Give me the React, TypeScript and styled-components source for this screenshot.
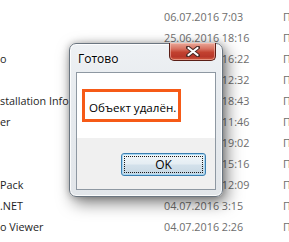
import React from "react";
import styled, { createGlobalStyle } from "styled-components";

const Global = createGlobalStyle`
  html, body { margin: 0; padding: 0; background: #ffffff; overflow: hidden; }
  body { font-family: "Open Sans", "Noto Sans", sans-serif; }
`;

const Screen = styled.div`
  position: relative;
  width: 289px;
  height: 242px;
  overflow: hidden;
  background: #ffffff;
`;

const FileList = styled.div`
  display: flex;
  flex-direction: column;
  padding-top: 6px;
`;

const Row = styled.div`
  display: grid;
  grid-template-columns: 164px 119px 1fr;
  height: 21px;
  line-height: 21px;
  font-size: 10.8px;
  white-space: nowrap;
`;

const NameCell = styled.div`
  color: #1e1e1e;
  overflow: hidden;
`;

const DateCell = styled.div`
  color: #6d6d6d;
`;

const TypeCell = styled.div`
  color: #6d6d6d;
  overflow: hidden;
`;

const Dialog = styled.div`
  position: absolute;
  left: 69px;
  top: 43px;
  width: 154px;
  height: 154px;
  box-sizing: border-box;
  padding: 0 6px 6px 6px;
  border: 1px solid #6a7580;
  border-radius: 7px;
  background: linear-gradient(#eef1f4 0%, #e6eaee 40%, #e2e6ea 100%);
  box-shadow: inset 0 0 0 1px rgba(255, 255, 255, 0.85), 4px 6px 16px rgba(0, 0, 0, 0.5),
    0 0 7px rgba(0, 0, 0, 0.25);
  display: flex;
  flex-direction: column;
`;

const TitleBar = styled.div`
  position: relative;
  height: 28px;
  display: flex;
  align-items: center;
  padding-left: 2px;
  font-size: 12px;
  color: #000;
  text-shadow: 0 0 6px #fff, 0 0 3px #fff;
`;

const CloseButton = styled.div`
  position: absolute;
  top: -1px;
  right: 0;
  width: 47px;
  height: 18px;
  box-sizing: border-box;
  border: 1px solid #5a1e16;
  border-top: none;
  border-radius: 0 0 5px 5px;
  background: linear-gradient(#e9a898 0%, #d7705f 35%, #c2412f 55%, #b8372a 80%, #d05a3e 100%);
  box-shadow: inset 0 0 0 1px rgba(255, 210, 200, 0.5);
  display: flex;
  align-items: center;
  justify-content: center;
`;

const Client = styled.div`
  flex: 1;
  border: 1px solid #8e98a2;
  display: flex;
  flex-direction: column;
`;

const MessageArea = styled.div`
  height: 65px;
  background: #ffffff;
  padding: 16px 0 0 5px;
  box-sizing: border-box;
`;

const Highlight = styled.div`
  width: 99px;
  height: 33px;
  box-sizing: border-box;
  border: 3px solid #f65a17;
  padding: 8px 0 0 4px;
  font-size: 11.6px;
  line-height: 16px;
  color: #000;
  white-space: nowrap;
`;

const Footer = styled.div`
  flex: 1;
  background: #f0f0f0;
  display: flex;
  justify-content: flex-end;
  align-items: flex-start;
  padding: 15px 9px 0 0;
`;

const OkButton = styled.button`
  position: relative;
  width: 85px;
  height: 23px;
  padding: 0;
  border: 1px solid #3c7fb1;
  border-radius: 3px;
  background: linear-gradient(#f1f6f9 0%, #e4edf3 48%, #d3e1eb 52%, #c6d7e3 100%);
  box-shadow: inset 0 0 0 1px #a9d8f3;
  font-family: "Open Sans", "Noto Sans", sans-serif;
  font-size: 12px;
  color: #000;

  &::after {
    content: "";
    position: absolute;
    inset: 2px;
    border: 1px dotted #1a1a1a;
    pointer-events: none;
  }
`;

const rows = [
  { name: "", date: "06.07.2016 7:03" },
  { name: "", date: "25.06.2016 18:16" },
  { name: "o", date: "05.07.2016 16:22" },
  { name: "", date: "05.07.2016 12:32" },
  { name: "stallation Info", date: "05.07.2016 18:43" },
  { name: "er", date: "05.07.2016 11:46" },
  { name: "", date: "04.07.2016 19:02" },
  { name: "", date: "04.07.2016 15:16" },
  { name: "Pack", date: "04.07.2016 12:09" },
  { name: ".NET", date: "04.07.2016 3:15" },
  { name: "o Viewer", date: "04.07.2016 2:26" },
];

export default function App() {
  return (
    <>
      <Global />
      <Screen>
        <FileList>
          {rows.map((r, i) => (
            <Row key={i}>
              <NameCell>{r.name}</NameCell>
              <DateCell>{r.date}</DateCell>
              <TypeCell>Папка с файлами</TypeCell>
            </Row>
          ))}
        </FileList>
        <Dialog>
          <TitleBar>
            Готово
            <CloseButton>
              <svg width="14" height="11" viewBox="0 0 14 11">
                <path
                  d="M2 1.5 L12 9.5 M12 1.5 L2 9.5"
                  stroke="#4a2a26"
                  strokeWidth="4"
                  strokeLinecap="round"
                  fill="none"
                />
                <path
                  d="M2.5 2 L11.5 9 M11.5 2 L2.5 9"
                  stroke="#ffffff"
                  strokeWidth="2.2"
                  strokeLinecap="round"
                  fill="none"
                />
              </svg>
            </CloseButton>
          </TitleBar>
          <Client>
            <MessageArea>
              <Highlight>Объект удалён.</Highlight>
            </MessageArea>
            <Footer>
              <OkButton>OK</OkButton>
            </Footer>
          </Client>
        </Dialog>
      </Screen>
    </>
  );
}
